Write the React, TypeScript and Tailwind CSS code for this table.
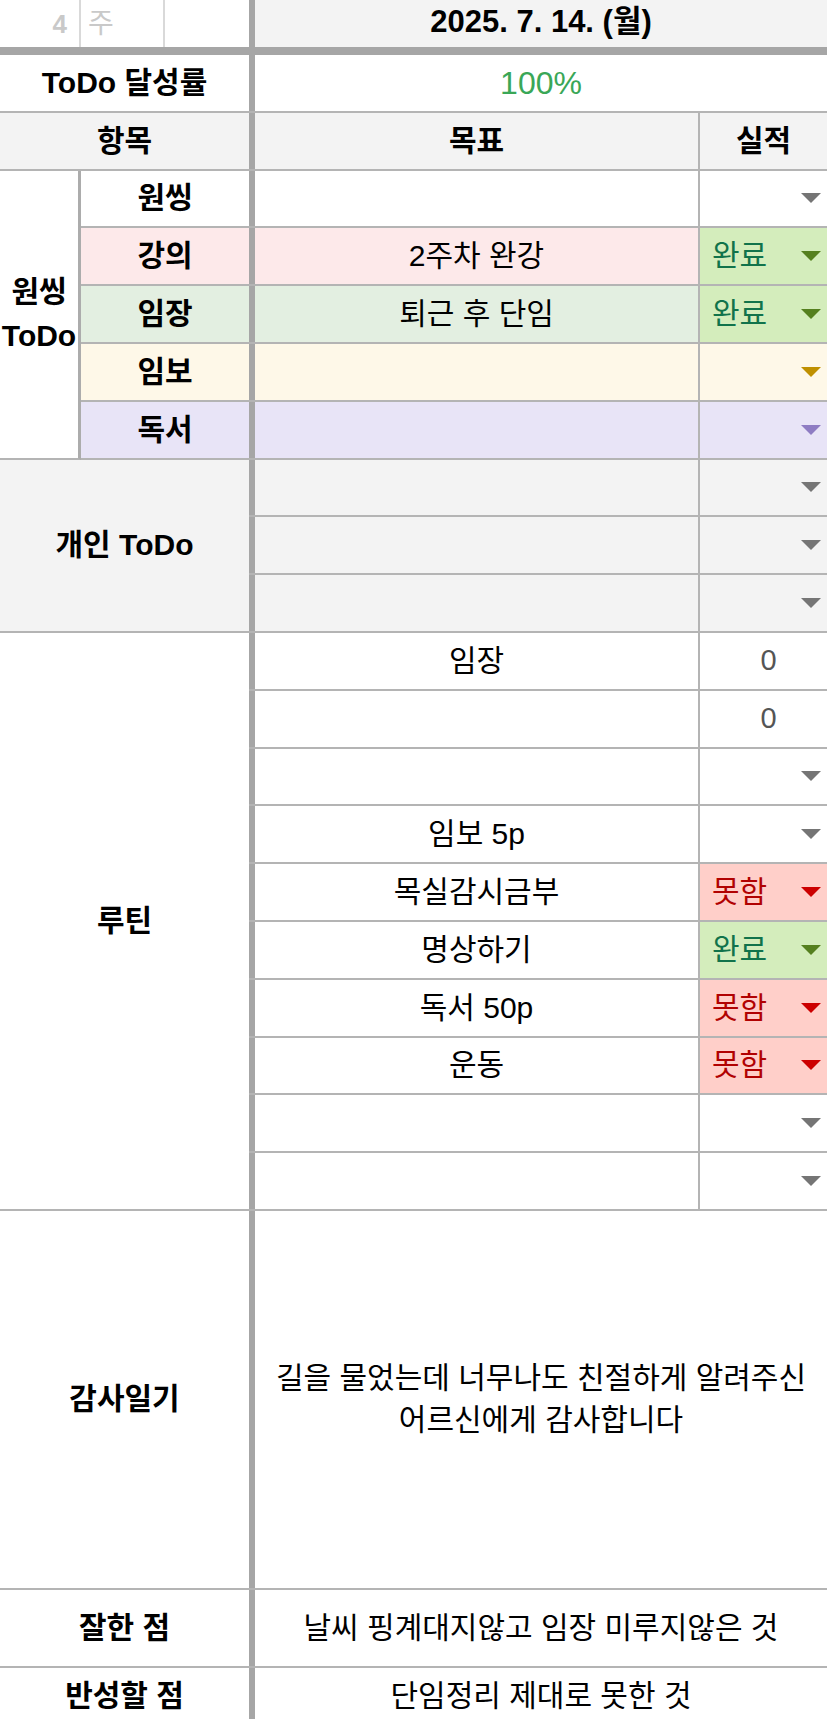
import React from 'react';

type StatusKind = 'arrow' | 'done' | 'fail' | 'yellow' | 'purple' | 'num';

const statusStyles: Record<StatusKind, { bg: string; text: string; label: string; arrow: string }> = {
  arrow: { bg: '', text: '', label: '', arrow: '#757575' },
  done: { bg: 'bg-[#d4edbc]', text: 'text-[#11734b]', label: '완료', arrow: '#55801f' },
  fail: { bg: 'bg-[#ffcfc9]', text: 'text-[#b10202]', label: '못함', arrow: '#cc0000' },
  yellow: { bg: '', text: '', label: '', arrow: '#bf9000' },
  purple: { bg: '', text: '', label: '', arrow: '#8e7cc3' },
  num: { bg: '', text: 'text-[#555555]', label: '0', arrow: '' },
};

const Arrow = ({ color }: { color: string }) => (
  <svg width="20" height="10" viewBox="0 0 20 10" className="shrink-0">
    <polygon points="0,0 20,0 10,10" fill={color} />
  </svg>
);

const StatusCell = ({ kind }: { kind: StatusKind }) => {
  const s = statusStyles[kind];
  if (kind === 'num') {
    return <div className="flex-1 flex items-center justify-center pl-[10px] text-[#555555] text-[29px]">0</div>;
  }
  return (
    <div className={`flex-1 flex items-center justify-between pl-3 pr-[6px] ${s.bg} ${s.text}`}>
      <span>{s.label}</span>
      <Arrow color={s.arrow} />
    </div>
  );
};

// 목표 + 실적 두 칸 (굵은 세로선 포함)
const GoalCells = ({ goal, status }: { goal: string; status: StatusKind }) => (
  <>
    <div className="w-[451px] shrink-0 flex items-center justify-center border-l-[6px] border-l-[#a6a6a6] border-r-2 border-r-[#b4b4b4]">
      {goal}
    </div>
    <StatusCell kind={status} />
  </>
);

const oneThing = [
  { label: '원씽', bg: 'bg-white', goal: '', status: 'arrow' as StatusKind },
  { label: '강의', bg: 'bg-[#fde9ea]', goal: '2주차 완강', status: 'done' as StatusKind },
  { label: '임장', bg: 'bg-[#e3efe1]', goal: '퇴근 후 단임', status: 'done' as StatusKind },
  { label: '임보', bg: 'bg-[#fef8e8]', goal: '', status: 'yellow' as StatusKind },
  { label: '독서', bg: 'bg-[#e8e4f7]', goal: '', status: 'purple' as StatusKind },
];

const routines: { goal: string; status: StatusKind }[] = [
  { goal: '임장', status: 'num' },
  { goal: '', status: 'num' },
  { goal: '', status: 'arrow' },
  { goal: '임보 5p', status: 'arrow' },
  { goal: '목실감시금부', status: 'fail' },
  { goal: '명상하기', status: 'done' },
  { goal: '독서 50p', status: 'fail' },
  { goal: '운동', status: 'fail' },
  { goal: '', status: 'arrow' },
  { goal: '', status: 'arrow' },
];

export default function App() {
  return (
    <div className="w-[827px] bg-white text-black text-[30px] leading-none font-['Liberation_Sans','Noto_Sans_CJK_KR',sans-serif]">
      {/* 날짜 행 */}
      <div className="flex h-[55px] border-b-[8px] border-b-[#a6a6a6]">
        <div className="w-[81px] flex items-center justify-end pr-3 border-r-2 border-r-[#d9d9d9] text-[#c9c9c9] font-bold text-[26px]">
          4
        </div>
        <div className="w-[84px] flex items-center pl-[7px] border-r-2 border-r-[#d9d9d9] text-[#c9c9c9] text-[28px]">
          주
        </div>
        <div className="w-[84px]" />
        <div className="flex-1 flex items-center justify-center pb-[4px] bg-[#f3f3f3] border-l-[6px] border-l-[#a6a6a6] font-bold text-[31px]">
          2025. 7. 14. (월)
        </div>
      </div>

      {/* 달성률 */}
      <div className="flex h-[57.8px] border-b-2 border-b-[#b4b4b4]">
        <div className="w-[249px] flex items-center justify-center font-bold">ToDo 달성률</div>
        <div className="flex-1 flex items-center justify-center border-l-[6px] border-l-[#a6a6a6] text-[#3aa757] text-[32px]">
          100%
        </div>
      </div>

      {/* 헤더 */}
      <div className="flex h-[57.8px] bg-[#f3f3f3] border-b-2 border-b-[#b4b4b4] font-bold">
        <div className="w-[249px] flex items-center justify-center">항목</div>
        <div className="w-[451px] flex items-center justify-center border-l-[6px] border-l-[#a6a6a6] border-r-2 border-r-[#b4b4b4]">
          목표
        </div>
        <div className="flex-1 flex items-center justify-center">실적</div>
      </div>

      {/* 원씽 ToDo */}
      <div className="flex">
        <div className="w-[81px] shrink-0 flex items-center justify-center text-center font-bold leading-[44px] border-r-[3px] border-r-[#acacac] border-b-2 border-b-[#b4b4b4]">
          원씽
          <br />
          ToDo
        </div>
        <div className="flex-1 flex flex-col">
          {oneThing.map((r) => (
            <div key={r.label} className={`flex h-[57.8px] border-b-2 border-b-[#b4b4b4] ${r.bg}`}>
              <div className="w-[168px] shrink-0 flex items-center justify-center font-bold">{r.label}</div>
              <GoalCells goal={r.goal} status={r.status} />
            </div>
          ))}
        </div>
      </div>

      {/* 개인 ToDo */}
      <div className="flex bg-[#f3f3f3]">
        <div className="w-[249px] shrink-0 flex items-center justify-center font-bold border-b-2 border-b-[#b4b4b4]">
          개인 ToDo
        </div>
        <div className="flex-1 flex flex-col">
          {[0, 1, 2].map((i) => (
            <div key={i} className="flex h-[57.8px] border-b-2 border-b-[#b4b4b4]">
              <GoalCells goal="" status="arrow" />
            </div>
          ))}
        </div>
      </div>

      {/* 루틴 */}
      <div className="flex">
        <div className="w-[249px] shrink-0 flex items-center justify-center font-bold border-b-2 border-b-[#b4b4b4]">
          루틴
        </div>
        <div className="flex-1 flex flex-col">
          {routines.map((r, i) => (
            <div key={i} className="flex h-[57.8px] border-b-2 border-b-[#b4b4b4]">
              <GoalCells goal={r.goal} status={r.status} />
            </div>
          ))}
        </div>
      </div>

      {/* 감사일기 */}
      <div className="flex h-[379px] border-b-2 border-b-[#b4b4b4]">
        <div className="w-[249px] shrink-0 flex items-center justify-center font-bold">감사일기</div>
        <div className="flex-1 flex items-center justify-center text-center leading-[42px] border-l-[6px] border-l-[#a6a6a6]">
          길을 물었는데 너무나도 친절하게 알려주신
          <br />
          어르신에게 감사합니다
        </div>
      </div>

      {/* 잘한 점 */}
      <div className="flex h-[78px] border-b-2 border-b-[#b4b4b4]">
        <div className="w-[249px] shrink-0 flex items-center justify-center font-bold">잘한 점</div>
        <div className="flex-1 flex items-center justify-center border-l-[6px] border-l-[#a6a6a6]">
          날씨 핑계대지않고 임장 미루지않은 것
        </div>
      </div>

      {/* 반성할 점 */}
      <div className="flex h-[58px] border-b-2 border-b-[#b4b4b4]">
        <div className="w-[249px] shrink-0 flex items-center justify-center font-bold">반성할 점</div>
        <div className="flex-1 flex items-center justify-center border-l-[6px] border-l-[#a6a6a6]">
          단임정리 제대로 못한 것
        </div>
      </div>
    </div>
  );
}
